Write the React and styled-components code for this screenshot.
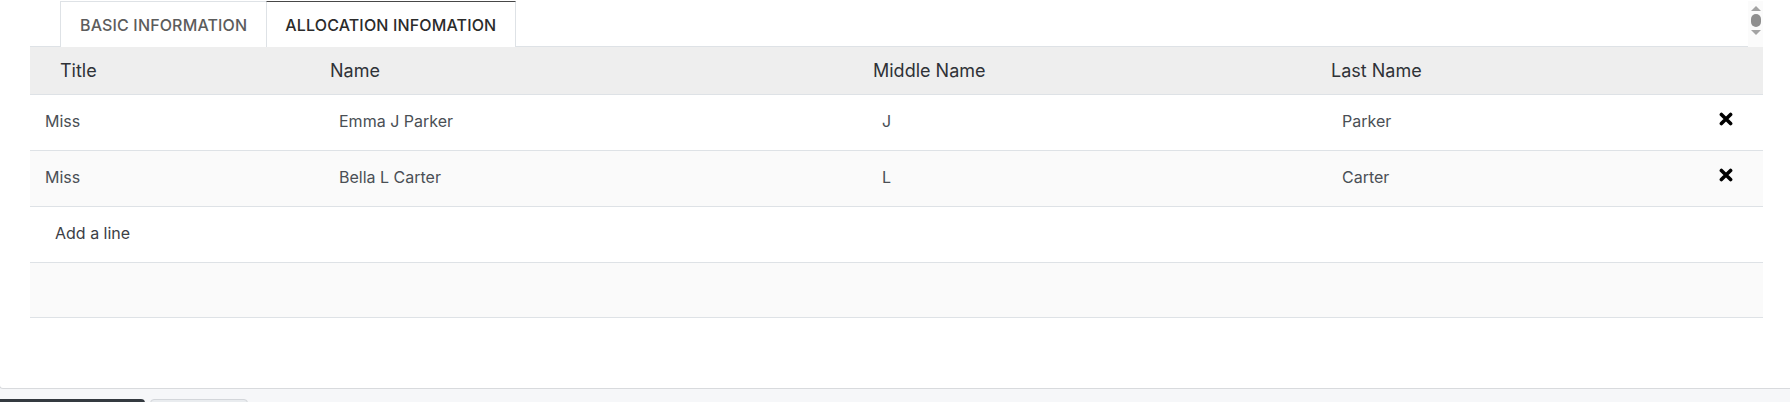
import React from "react";
import styled, { createGlobalStyle } from "styled-components";

const GlobalStyle = createGlobalStyle`
  html, body {
    margin: 0;
    padding: 0;
    background: #f6f7f9;
    font-family: "Inter", "Roboto", sans-serif;
  }
  * {
    box-sizing: border-box;
  }
`;

const columns = "288px 543px 458px 369px 75px";

const lines = [
  { id: 1, title: "Miss", name: "Emma J Parker", middle: "J", last: "Parker" },
  { id: 2, title: "Miss", name: "Bella L Carter", middle: "L", last: "Carter" },
];

const CloseIcon = () => (
  <svg width="14" height="14" viewBox="0 0 14 14">
    <path
      d="M2.4 2.4 L11.6 11.6 M11.6 2.4 L2.4 11.6"
      stroke="#000"
      strokeWidth="3.6"
      strokeLinecap="round"
    />
  </svg>
);

export default function App() {
  return (
    <Page>
      <GlobalStyle />
      <Card>
        <TabBar>
          <Tabs>
            <Tab>BASIC INFORMATION</Tab>
            <Tab $active>ALLOCATION INFOMATION</Tab>
          </Tabs>
          <MiniScroll>
            <Arrow $up />
            <Thumb />
            <Arrow />
          </MiniScroll>
        </TabBar>

        <Table>
          <HeadRow>
            <HeadCell $pad={30}>Title</HeadCell>
            <HeadCell>Name</HeadCell>
            <HeadCell>Middle Name</HeadCell>
            <HeadCell>Last Name</HeadCell>
            <HeadCell />
          </HeadRow>
          {lines.map((el, i) => (
            <Row key={el.id} $striped={i % 2 === 1}>
              <Cell $pad={15}>{el.title}</Cell>
              <Cell>{el.name}</Cell>
              <Cell>{el.middle}</Cell>
              <Cell $pad={23}>{el.last}</Cell>
              <DeleteCell>
                <CloseIcon />
              </DeleteCell>
            </Row>
          ))}
          <AddRow>
            <AddLink>Add a line</AddLink>
          </AddRow>
          <EmptyRow />
        </Table>
      </Card>

      <Footer>
        <DarkButton />
        <LightButton />
      </Footer>
    </Page>
  );
}

const Page = styled.div`
  width: 1790px;
  height: 402px;
  overflow: hidden;
  background: #f6f7f9;
`;

const Card = styled.div`
  height: 389px;
  background: #fff;
  border-bottom: 1px solid #d8dadd;
  border-left: 1px solid #d8dadd;
  border-bottom-left-radius: 4px;
  margin-left: -1px;
  padding: 1px 27px 0 30px;
`;

const TabBar = styled.div`
  display: flex;
  height: 46px;
`;

const Tabs = styled.div`
  flex: 1;
  display: flex;
  padding-left: 30px;
  border-bottom: 1px solid #dee2e6;
`;

const Tab = styled.div`
  display: flex;
  align-items: center;
  padding: ${(p) => (p.$active ? "0 19px 0 18px" : "0 19px 0 19px")};
  height: 46px;
  font-size: 16px;
  font-weight: 500;
  letter-spacing: 0.15px;
  color: ${(p) => (p.$active ? "#2b2b2b" : "#5c5c5c")};
  background: #fff;
  border: 1px solid #dee2e6;
  border-top: 1px solid ${(p) => (p.$active ? "#474747" : "#dee2e6")};
  border-bottom: none;
  margin-left: ${(p) => (p.$active ? "-1px" : "0")};
`;

const MiniScroll = styled.div`
  width: 15px;
  height: 46px;
  background: #fbfbfb;
  display: flex;
  flex-direction: column;
  align-items: center;
  padding-top: 5px;
  gap: 3px;
`;

const Arrow = styled.div`
  width: 0;
  height: 0;
  border-left: 5px solid transparent;
  border-right: 5px solid transparent;
  ${(p) =>
    p.$up
      ? "border-bottom: 5px solid #a3a3a3;"
      : "border-top: 5px solid #a3a3a3;"}
`;

const Thumb = styled.div`
  width: 10px;
  height: 13px;
  border-radius: 5px;
  background: #8f8f8f;
`;

const Table = styled.div`
  width: 1733px;
  display: flex;
  flex-direction: column;
`;

const HeadRow = styled.div`
  display: grid;
  grid-template-columns: ${columns};
  height: 48px;
  background: #eeeeee;
  border-bottom: 1px solid #dee2e6;
`;

const HeadCell = styled.div`
  display: flex;
  align-items: center;
  padding-left: ${(p) => p.$pad ?? 12}px;
  font-size: 18px;
  color: #2f3237;
`;

const Row = styled.div`
  display: grid;
  grid-template-columns: ${columns};
  height: 56px;
  background: ${(p) => (p.$striped ? "#fafafa" : "#fff")};
  border-bottom: 1px solid #dee2e6;
`;

const Cell = styled.div`
  display: flex;
  align-items: center;
  padding-left: ${(p) => p.$pad ?? 21}px;
  padding-bottom: 4px;
  font-size: 16px;
  color: #4a4f55;
`;

const DeleteCell = styled.div`
  display: flex;
  justify-content: center;
  align-items: center;
  padding-bottom: 8px;
`;

const AddRow = styled.div`
  display: flex;
  align-items: center;
  height: 56px;
  padding-left: 25px;
  padding-bottom: 4px;
  border-bottom: 1px solid #dee2e6;
`;

const AddLink = styled.span`
  font-size: 16px;
  color: #3c4046;
`;

const EmptyRow = styled.div`
  height: 55px;
  background: #fafafa;
  border-bottom: 1px solid #dee2e6;
`;

const Footer = styled.div`
  display: flex;
  gap: 5px;
  padding-top: 10px;
`;

const DarkButton = styled.div`
  width: 145px;
  height: 20px;
  background: #343a40;
  border-top-right-radius: 4px;
`;

const LightButton = styled.div`
  width: 98px;
  height: 20px;
  background: #e9ecef;
  border: 1px solid #d3d6da;
  border-radius: 4px 4px 0 0;
`;
